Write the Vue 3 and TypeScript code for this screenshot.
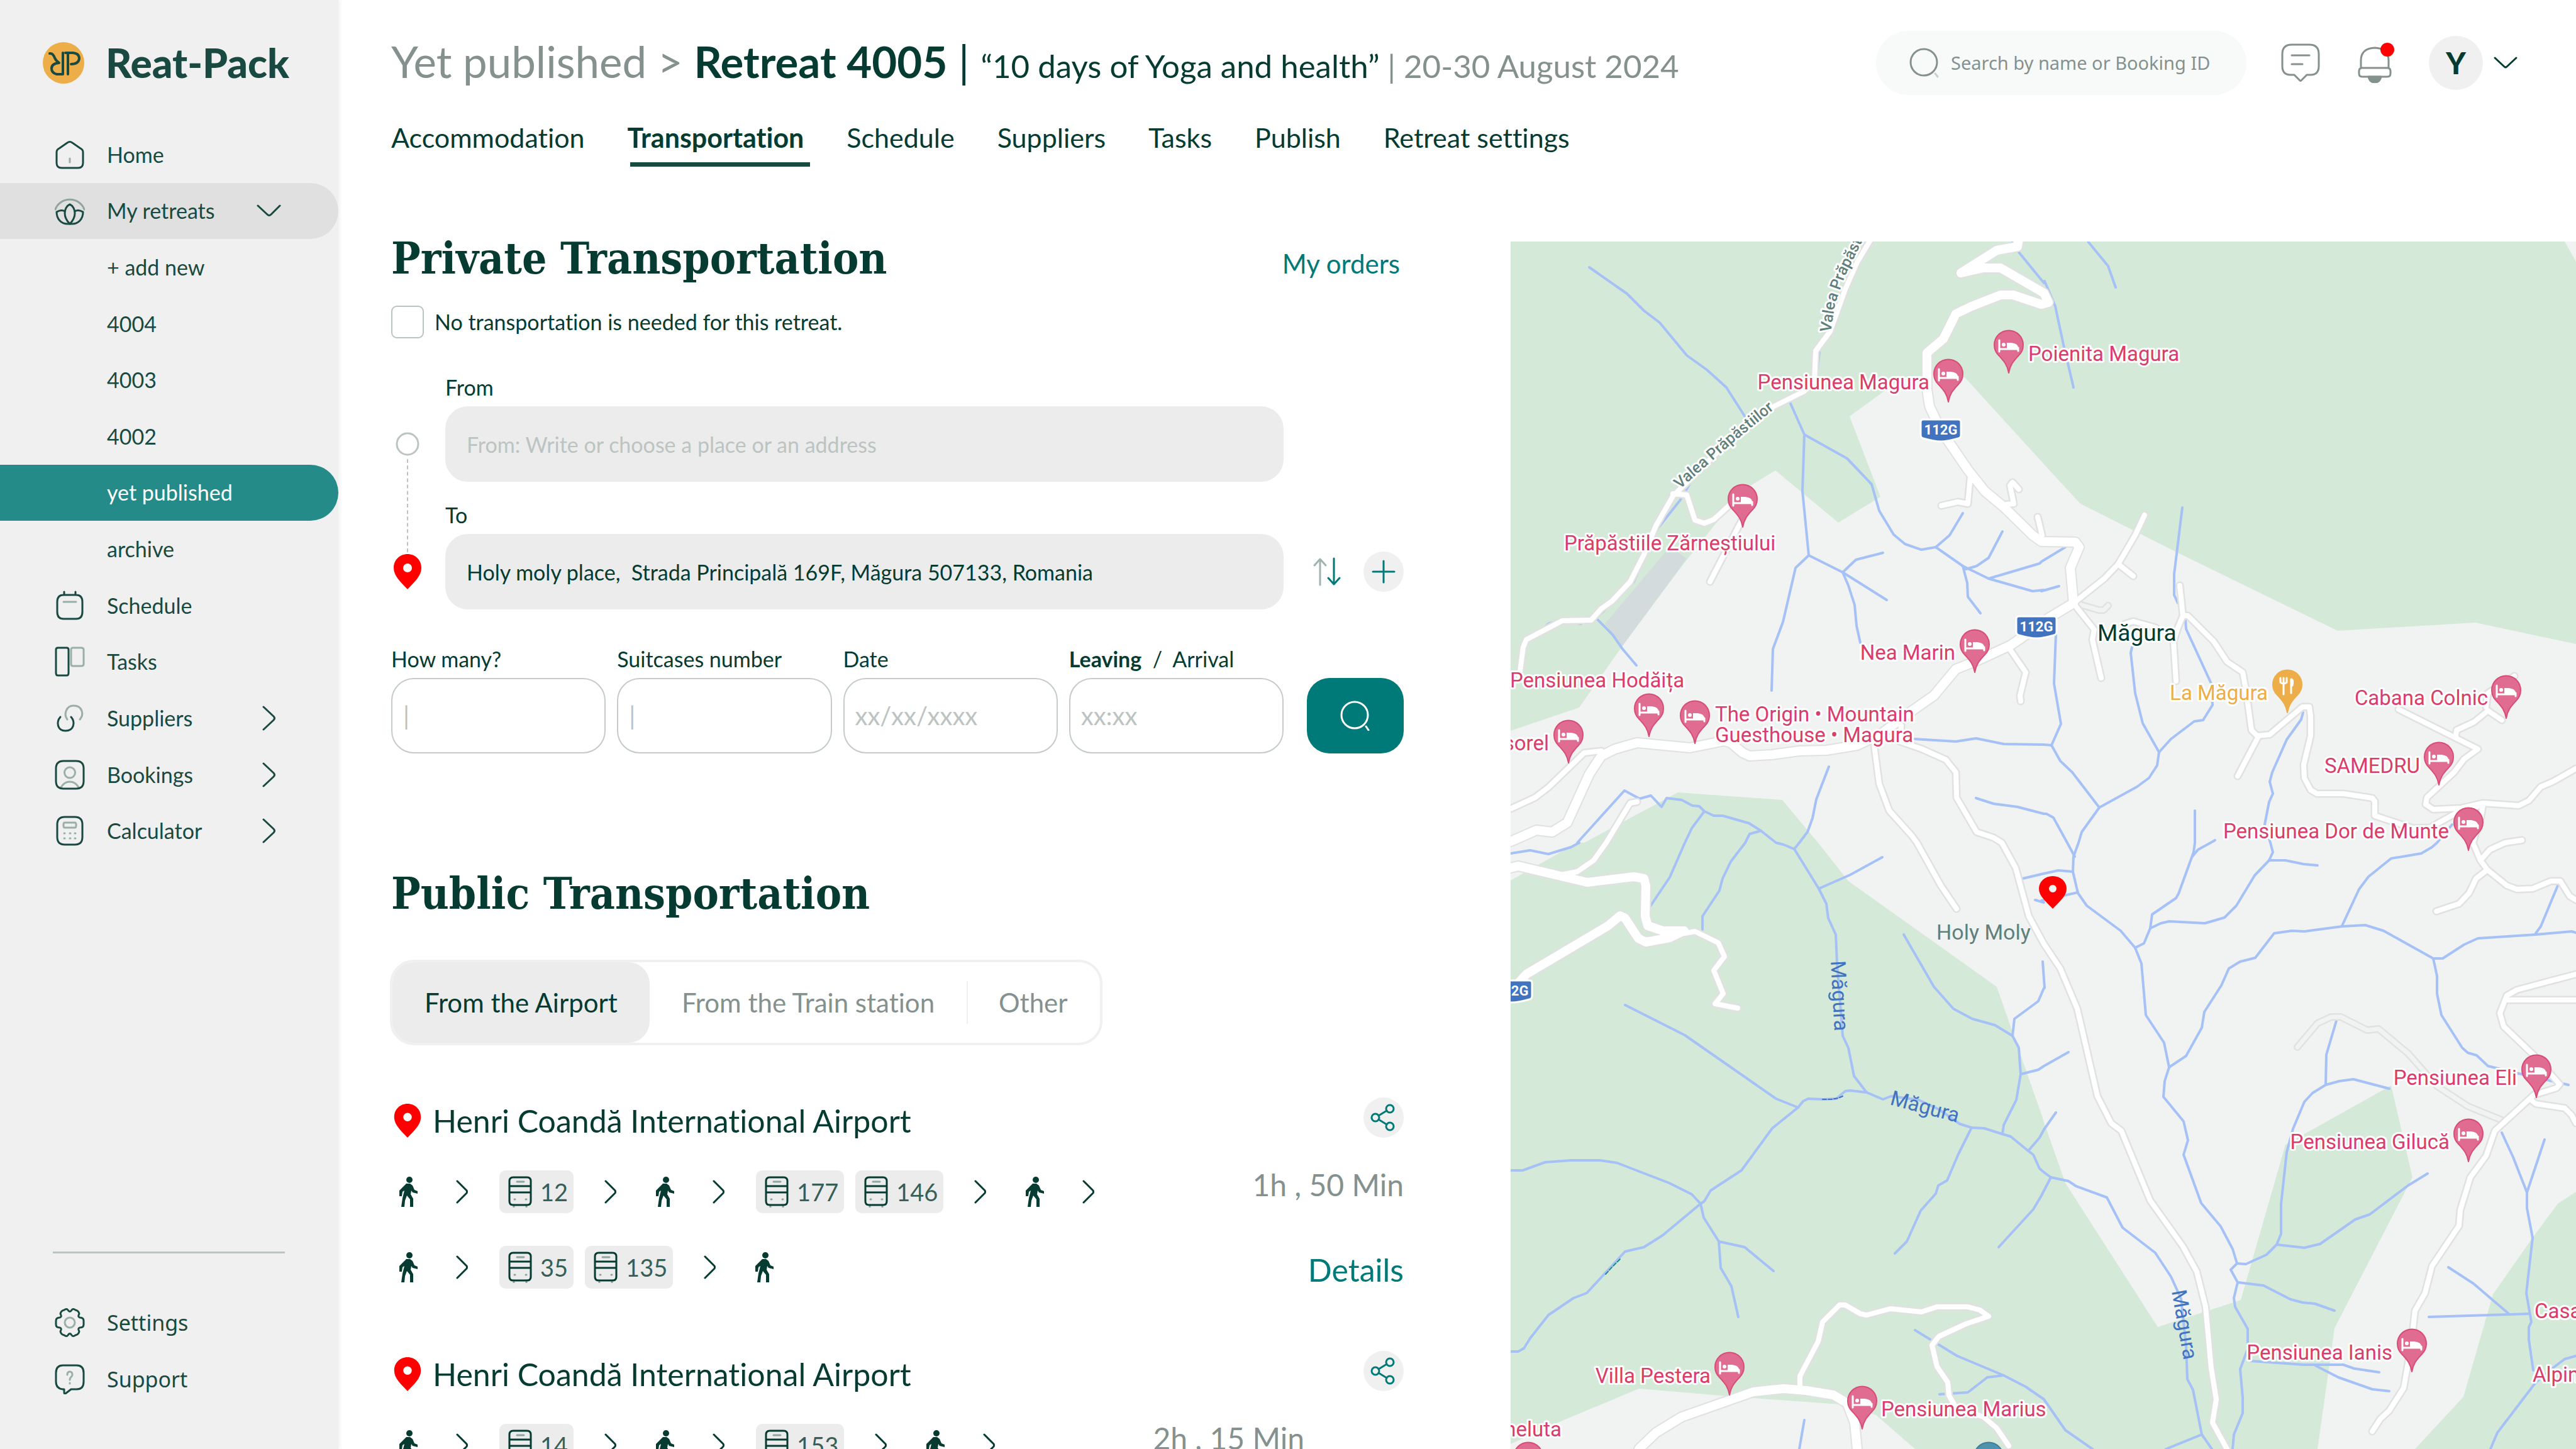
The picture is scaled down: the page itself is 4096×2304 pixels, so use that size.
<script setup lang="ts">
import { ref } from 'vue'

interface Stroke { d: string; soft?: boolean }
interface NavItem { label: string; icon?: string; arrow?: 'right' | 'down'; state?: 'open' | 'current' }
type Step = 'walk' | 'next' | string[]
interface Route { title: string; time: string; inset?: boolean; details: boolean; rows: Step[][] }

const icons: Record<string, Stroke[]> = {
  home: [
    { d: 'M3 20q0-4 4-6L20 5q4-3 8 0L41 14q4 2 4 6V37q0 8-8 8H11q-8 0-8-8Z' },
    { d: 'M24 30v6', soft: true },
  ],
  lotus: [
    { d: 'M1 22A24 22 0 0 1 47 22', soft: true },
    { d: 'M24 14c5 2 8 8 8 14s-3 12-8 17c-5-5-8-11-8-17s3-12 8-14Z' },
    { d: 'M16 25c-3-2-8-2-13 1 0 11 7 20 20 19M32 25c3-2 8-2 13 1 0 11-7 20-20 19' },
  ],
  calendar: [
    { d: 'M14 7H34q10 0 10 11V34q0 11-10 11H14Q4 45 4 34V18Q4 7 14 7ZM15 2v5M33 2v5' },
    { d: 'M14 18H34', soft: true },
  ],
  board: [
    { d: 'M5 2H19q3 0 3 3V42q0 4-3 4H5q-3 0-3-4V5q0-3 3-3Z' },
    { d: 'M29 2H42q4 0 4 3V28q0 3-4 3H29q-3 0-3-3V5q0-3 3-3Z', soft: true },
  ],
  link: [
    { d: 'M20 26C14 18 18 4 30 4 44 4 47 18 40 26', soft: true },
    { d: 'M9 22C2 30 4 44 17 44 31 44 33 30 26 22' },
  ],
  contact: [
    { d: 'M14 2H34q12 0 12 12V34q0 12-12 12H14Q2 46 2 34V14Q2 2 14 2Z' },
    { d: 'M24 12a8 8 0 1 1 0 17a8 8 0 1 1 0-17ZM10 44q5-9 14-9t14 9', soft: true },
  ],
  calculator: [
    { d: 'M16 2H32q12 0 12 12V34q0 12-12 12H16Q4 46 4 34V14Q4 2 16 2Z' },
    { d: 'M16 11H32q2 0 2 3v2q0 3-2 3H16q-2 0-2-3V14q0-3 2-3ZM15 28h1M24 28h1M32 28h1M15 36h1M24 36h1M32 36h1', soft: true },
  ],
  gear: [
    { d: 'M21 4q3 5 6 0 2-3 6 0 5 1 6 6-3 5 1 6 6 0 6 5v6q0 5-6 5-4 1-1 6-1 5-6 6-4 3-6 0-3-5-6 0-2 3-6 0-5-1-6-6 3-5-1-6-6 0-6-5V21q0-5 6-5 4-1 1-6 1-5 6-6 4-3 6 0Z' },
    { d: 'M24 16a8 8 0 1 1 0 16a8 8 0 1 1 0-16Z', soft: true },
  ],
  question: [
    { d: 'M13 2H35q11 0 11 12V28q0 12-11 12H26L17 47q-2 1-2-2V40H13Q2 39 2 28V14Q2 2 13 2Z' },
    { d: 'M20 17q0-5 4-5t4 5c0 4-4 3-4 8M24 30v1', soft: true },
  ],
}

const nav: NavItem[] = [
  { label: 'Home', icon: 'home' },
  { label: 'My retreats', icon: 'lotus', arrow: 'down', state: 'open' },
  { label: '+ add new' },
  { label: '4004' },
  { label: '4003' },
  { label: '4002' },
  { label: 'yet published', state: 'current' },
  { label: 'archive' },
  { label: 'Schedule', icon: 'calendar' },
  { label: 'Tasks', icon: 'board' },
  { label: 'Suppliers', icon: 'link', arrow: 'right' },
  { label: 'Bookings', icon: 'contact', arrow: 'right' },
  { label: 'Calculator', icon: 'calculator', arrow: 'right' },
]
const secondary: NavItem[] = [
  { label: 'Settings', icon: 'gear' },
  { label: 'Support', icon: 'question' },
]

const tabs = ['Accommodation', 'Transportation', 'Schedule', 'Suppliers', 'Tasks', 'Publish', 'Retreat settings']
const activeTab = ref('Transportation')

const sources = ['From the Airport', 'From the Train station', 'Other']
const activeSource = ref('From the Airport')

const noTransport = ref(false)
const from = ref('')
const to = ref('Holy moly place,  Strada Principală 169F, Măgura 507133, Romania')
const search = ref('')
const fields = [
  { id: 'people', label: 'How many?', hint: '|' },
  { id: 'suitcases', label: 'Suitcases number', hint: '|' },
  { id: 'date', label: 'Date', hint: 'xx/xx/xxxx' },
  { id: 'time', label: 'Leaving', alt: 'Arrival', hint: 'xx:xx' },
]

const routes: Route[] = [
  {
    title: 'Henri Coandă International Airport',
    time: '1h , 50 Min',
    details: true,
    rows: [
      ['walk', 'next', ['12'], 'next', 'walk', 'next', ['177', '146'], 'next', 'walk', 'next'],
      ['walk', 'next', ['35', '135'], 'next', 'walk'],
    ],
  },
  {
    title: 'Henri Coandă International Airport',
    time: '2h , 15 Min',
    inset: true,
    details: false,
    rows: [['walk', 'next', ['14'], 'next', 'walk', 'next', ['153'], 'next', 'walk', 'next']],
  },
]

// The map is surveyed in four sheets; every sheet has its own 1568-unit grid.
const sheets: Record<string, { x: number; y: number; w: number; h: number }> = {
  A: { x: -2, y: -4, w: 850, h: 960 },
  B: { x: 844, y: -4, w: 850, h: 960 },
  C: { x: -2, y: 956, w: 850, h: 964 },
  D: { x: 844, y: 956, w: 850, h: 964 },
}
function place(sheet: string, x: number, y: number): [number, number] {
  const s = sheets[sheet]
  return [Math.round(s.x + (x * s.w) / 1568), Math.round(s.y + (y * s.h) / 1568)]
}
// A trace is a list of points; a letter switches to another sheet.
function trace(points: string): string {
  let sheet = 'A'
  const out: string[] = []
  for (const token of points.split(' ')) {
    if (sheets[token]) sheet = token
    else {
      const [x, y] = token.split(',').map(Number)
      out.push(place(sheet, x, y).join(','))
    }
  }
  return out.join(' ')
}

const woods = [
  'A 4,7 B 1535,7 1568,58 1568,1052 1272,997 868,1017 400,815 115,687 0,578 A 1568,585 1335,360 1225,355 1150,360 1100,395 998,460 1088,670 965,737 780,601 700,645 640,700 515,840 330,1058 205,1217 4,1277',
  'A 220,1568 495,1437 800,1457 875,1535 C 905,0 995,100 1430,372 1475,490 1568,720 D 0,705 70,880 342,1252 585,1183 715,780 1025,628 1088,865 860,1255 845,1350 810,1568 C 1190,1568 1075,1480 970,1452 640,1432 380,1412 130,1505 4,1555 4,97 200,0',
  'D 1568,902 1515,933 1440,1022 1325,1168 1238,1433 1095,1568 1568,1568',
].map(trace)
const quarry = trace('A 455,815 490,812 520,830 330,1058 280,1000')

const streams = [
  'A 235,73 345,142 395,187 440,217 520,302 580,340 637,385 692,462',
  'A 910,290 902,360',
  'A 760,450 820,420 865,508 990,570 1063,637 1085,705 1128,767 1160,792 1208,807 1250,800 1330,850 1405,882 1535,915 1568,912 B 0,915 52,902',
  'A 1250,800 1292,770 1330,712',
  'A 1330,850 1343,893 1345,930 1382,972',
  'A 1340,857 1370,850 1405,828 1447,760',
  'A 1405,882 1555,843 B 0,838 70,800',
  'A 865,508 860,655 878,822 977,866 1107,938',
  'A 977,866 1017,833 1095,815',
  'A 977,866 995,900 1012,950 1018,1005 1030,1048',
  'A 878,822 840,855 833,875 803,995 773,1065 770,1172',
  'A 530,635 500,680 435,752 400,820 365,890 255,985 302,1027 332,1065 373,1108',
  'A 60,1042 115,1000 150,990 210,1000',
  'A 1190,1298 1310,1305 1368,1297 1450,1312 1568,1313 B 30,1315 55,1355 90,1385 170,1477 118,1540 108,1568 D 108,0 95,35 92,75 107,130 132,162 232,228 275,272 293,312 307,445 360,517 375,580 362,617 358,657 417,720 429,770 416,807 468,932 525,992 560,1050 573,1088 555,1105 576,1137 565,1177 568,1200 605,1258 605,1310 583,1362 591,1435 590,1475 565,1530 560,1568',
  'B 42,1025 36,1155 58,1260 30,1315',
  'A 938,1370 900,1455 890,1505 875,1540 850,1568 C 835,17',
  'A 1368,1452 1420,1466 1490,1475 1568,1493 B 15,1493 35,1503 75,1568 D 97,35',
  'A 200,1568 337,1433 382,1453 415,1445 447,1475 462,1452 505,1457 537,1472 557,1474 572,1487 600,1498 625,1497 702,1517 737,1537 782,1568 C 805,5 835,17 908,118 930,157 935,195 957,237 962,310 978,500 995,530 1010,603 1047,645 1095,663 1120,655 1200,665 1260,690 1320,727 1355,737 1392,738 1445,753 1470,760 1522,797 1537,807 1555,843 1568,852 D 27,865 80,875 102,888 192,918 238,995 333,1060 380,1122 410,1180 425,1300 428,1387 445,1415 470,1530 500,1568',
  'C 4,28 60,20 115,30 180,12 205,0',
  'A 572,1487 535,1530 515,1568 C 470,90 413,165',
  'A 737,1537 705,1545 692,1568 C 650,48 625,92 617,123 567,190 567,225',
  'C 908,118 1000,83 1094,37',
  'C 340,420 515,497 782,662 847,685 862,668 877,662 920,663 960,662 985,643 1000,641 1047,645',
  'C 847,685 772,738 680,848 590,900 572,927 560,933 450,1015 395,1046 340,1058 227,1165 188,1177 115,1221 60,1282 42,1308 25,1316 4,1316',
  'C 4,848 38,847 105,826 180,821 265,821 315,828 468,880 535,910 560,933 570,970 615,1031 690,1046 775,1108',
  'C 615,1031 620,1100 652,1147 671,1227',
  'C 1157,237 1245,373 1303,430 1358,455 1425,472 1475,500 1495,530 1499,598 1487,665 1450,730 1447,753',
  'C 1475,500 1482,455 1552,410 1568,375 D 10,375 4,308',
  'C 1499,598 1552,587 1568,578 D 80,542',
  'C 1355,737 1318,805 1283,873 1258,886 1250,908 1207,952 1165,1032 1130,1062',
  'C 1522,797 1555,763 1568,742 D 42,698',
  'D 27,865 0,912 C 1537,948 1435,1046',
  'C 1190,1260 1313,1327 1450,1377 1515,1407 1568,1440 D 70,1520 150,1568',
  'C 1450,1377 1402,1382 1345,1421 1262,1427',
  'C 1505,92 1568,80 D 50,72 92,75',
  'C 1543,148 1568,155 D 0,150 107,128',
  'C 865,1493 850,1568',
  'B 265,1060 262,1075 275,1180 297,1257 345,1332 340,1367 315,1400 280,1423 170,1477',
  'B 345,1332 380,1298 448,1252 475,1249 502,1210 498,1155 425,1013 422,990',
  'B 414,698 390,870 390,925 400,945',
  'B 767,1230 762,1248 720,1300 677,1385 670,1410 679,1440 667,1462 655,1520 672,1568 D 678,25 668,46 625,85 572,162 537,193 480,208 375,204 350,209 320,222 300,260 275,272',
  'D 668,46 715,46 770,56 810,59',
  'B 451,1485 450,1568 D 447,25 403,132 395,143 325,185 320,222',
  'D 440,38 460,18 497,0 B 510,1562',
  'B 1205,1520 1160,1568 D 1145,12 1115,27 1025,40 960,88 932,120 882,215',
  'D 375,580 425,552 470,478 477,437 528,370 550,325 583,307 628,297 682,235 735,227 772,230 882,217 950,213 1003,227 1150,300 1177,300 1240,263 1280,247 1450,237 1555,229 1568,233',
  'D 1514,110 1465,217 1450,235',
  'D 1150,300 1160,345 1160,390 1173,445 1235,530 1250,543 1277,550 1310,577 1400,597 1545,627',
  'D 865,460 835,548 833,627',
  'D 1020,636 915,612 875,616 833,627 795,647 772,670 737,740 720,800 703,935 703,1012 690,1040 660,1065 600,1090 573,1088',
  'D 690,1040 772,1048 817,1038 920,975 963,962 1075,887 1132,856',
  'D 576,1137 652,1145 730,1181 765,1189 803,1192 860,1210',
  'D 615,1340 770,1350 885,1350 917,1360 990,1370',
  'D 803,1352 870,1383 970,1413 1020,1419',
  'D 1350,750 1383,813 1425,905 1475,767',
  'D 1425,905 1425,945 1440,1022 1422,1165 1437,1240 1430,1252 1430,1285 1442,1365',
  'D 1137,1227 1432,1219',
  'D 1193,1098 1267,1141 1368,1217',
  'D 1568,1328 1535,1335 1505,1355 1450,1395 1337,1525 1317,1568',
  'D 365,1568 470,1530',
  'B 137,7 195,70 217,125',
  'A 1475,7 1495,35 1568,115 B 10,110 40,175 65,275 95,385',
].map(trace)

const fords = [
  ['C 918,664 945,664 965,660 978,655', '#4173bf'],
  ['C 283,1116 303,1097 324,1077', '#258b89'],
].map(([points, color]) => ({ points: trace(points), color }))

const tracks = [
  'D 750,528 810,467 850,450 878,450 955,485 988,482 1075,545 1160,630 1250,682 1350,718',
  'B 100,945 168,963 183,963 195,952',
].map(trace)

const lanes = [
  'A 1060,0 1020,60 985,130 940,240 898,290 895,370 865,395 740,450 620,545 500,650 480,668 430,745 395,820 355,890 300,940 270,960 240,990 155,992 50,1040 40,1060 30,1135',
  'A 480,662 520,665 545,730 572,738 600,728 660,680',
  'A 684,725 588,890',
  'A 1352,615 1345,688 1315,683 1268,692',
  'A 1455,690 1480,688 1468,640 1475,632 1495,650',
  'A 1550,722 1562,770',
  'B 95,945 185,882 225,845 275,770 302,717',
  'B 225,845 270,875',
  'B 98,950 155,1015 150,1040 176,1140',
  'B 405,900 415,978 400,1010 388,1045 395,1148',
  'B 245,1000 270,993 335,1010',
  'B 415,978 430,978 505,1045 545,1098 590,1125 600,1170 617,1275 632,1290 670,1287 765,1215 785,1215 790,1240 790,1290 770,1365 772,1400 790,1430 808,1441 885,1441 970,1452 978,1460 978,1498 1090,1530 1140,1528 1220,1490 1295,1470 1290,1500 1265,1568 D 1288,45 1308,70 1275,92 1255,130 1225,157 1158,177',
  'B 635,1295 575,1395',
  'B 1048,1222 1280,1325 1240,1350 1210,1385 1130,1450 1128,1468 1150,1481 1230,1478 1295,1465 1400,1472 1430,1458 1465,1423 1500,1410 1568,1375',
  'B 1215,1290 1218,1275 1270,1255 1310,1225 1350,1250',
  'B 1305,1215 1310,1180 1388,1135',
  'D 1308,70 1365,110 1395,120 1440,118 1495,100 1522,100 1550,138 1568,148',
  'D 1288,45 1315,18 1360,0 B 1410,1562',
  'A 4,1480 75,1450 115,1425 220,1335 270,1330',
  'A 375,1462 355,1465 285,1568 C 248,45 200,75 160,82',
  'A 1470,1068 1515,1125 1497,1185 1500,1200',
  'A 1070,1315 1085,1415 1115,1485 1180,1550 C 1195,0 1265,110 1312,170',
  'A 1150,1265 1145,1305 1210,1325 1280,1353 1310,1385 1312,1450 1370,1540 1420,1555 C 1445,0 1485,65 1523,190 1568,262 D 55,325 105,430 165,655 205,725 235,745 320,925 415,1045 455,1110 482,1200 498,1360 512,1440 502,1500 545,1568',
  'C 515,235 545,230 612,258 630,295 600,330 627,390 603,417 670,428',
  'C 853,1405 853,1380 905,1290 918,1240 968,1195 985,1195 1030,1218 1048,1222 1118,1205 1208,1213 1255,1200 1345,1200 1380,1208 1405,1225 1340,1245 1260,1277 1240,1300 1255,1355 1285,1395 1290,1430 1310,1460 1390,1485 1430,1515 1465,1560',
  'D 1568,340 1395,380 1365,395 1345,440 1355,475 1445,550 1520,625 1510,635 1445,652 1330,745 1305,810 1258,865 1228,950 1225,990 1145,1095 1125,1165 1095,1210 1085,1300 1062,1410 1020,1468 995,1490 970,1522',
  'D 1365,407 1568,406',
  'D 1440,668 1450,675 1535,687 1555,705 1568,725',
].map(trace)

const roads = [
  'A 1495,0 1490,20 1430,30 1325,88 1390,75 1440,75 1568,140 B 20,165 0,170 A 1478,145 1440,145 1355,175 1310,195 1272,260 1225,295 1225,390 1233,435 1265,497 1345,600 1395,655 1450,695 1535,770 B 0,785 100,788 110,800 85,855 95,945 20,985 A 1545,1010 1470,1055 1375,1095 1310,1118 1245,1185 1165,1235 1090,1285 1020,1315 930,1328 850,1330 770,1340 705,1342 685,1335 650,1308 630,1303 530,1322 375,1308 310,1325 270,1342 235,1390 170,1515 125,1540 80,1535 4,1565',
  'C 4,65 25,60 228,102 365,88 395,92 400,110 398,190 405,215 450,228 512,228 470,245 400,257 378,248 340,195 325,188 290,215 50,340 4,385',
  'C 380,1568 430,1525 505,1485 715,1420 805,1412 870,1416 950,1428 990,1450 1012,1500 1020,1568',
].map(trace)

interface Label { at: [string, number, number]; text: string; tone?: string; end?: boolean; turn?: number }
const labels = ([
  { at: ['A', 1232, 391], text: 'Pensiunea Magura', end: true },
  { at: ['A', 1521, 317], text: 'Poienita Magura' },
  { at: ['A', 160, 809], text: 'Prăpăstiile Zărneștiului' },
  { at: ['A', 2, 1165], text: 'Pensiunea Hodăița' },
  { at: ['A', 116, 1328], text: 'sorel', end: true },
  { at: ['A', 603, 1252], text: 'The Origin • Mountain' },
  { at: ['A', 603, 1306], text: 'Guesthouse • Magura' },
  { at: ['A', 1308, 1093], text: 'Nea Marin', end: true },
  { at: ['B', 165, 1044], text: 'Măgura', tone: 'town' },
  { at: ['B', 665, 1197], text: 'La Măgura', tone: 'food', end: true },
  { at: ['B', 1310, 1211], text: 'Cabana Colnic', end: true },
  { at: ['B', 1110, 1386], text: 'SAMEDRU', end: true },
  { at: ['B', 1195, 1556], text: 'Pensiunea Dor de Munte', end: true },
  { at: ['C', 1253, 250], text: 'Holy Moly', tone: 'place' },
  { at: ['C', 590, 1397], text: 'Villa Pestera', end: true },
  { at: ['C', 1091, 1484], text: 'Pensiunea Marius' },
  { at: ['C', 153, 1536], text: 'neluta', end: true },
  { at: ['D', 1395, 626], text: 'Pensiunea Eli', end: true },
  { at: ['D', 1197, 792], text: 'Pensiunea Gilucă', end: true },
  { at: ['D', 1030, 1337], text: 'Pensiunea Ianis', end: true },
  { at: ['D', 1447, 1229], text: 'Casa' },
  { at: ['D', 1440, 1394], text: 'Alpin' },
  { at: ['C', 943, 305], text: 'Măgura', tone: 'river', turn: 87 },
  { at: ['C', 1115, 676], text: 'Măgura', tone: 'river', turn: 15 },
  { at: ['D', 382, 1160], text: 'Măgura', tone: 'river', turn: 80 },
] as Label[]).map((l) => ({ ...l, xy: place(...l.at) }))

const valleyLow = 'M' + trace('A 500,650 575,592 665,522 762,452 800,425')
const valleyHigh = 'M' + trace('A 942,243 955,168 985,95 1045,-10 1080,-60')

const inns = ([
  ['A', 1288, 425], ['A', 1464, 350], ['A', 684, 750], ['A', 409, 1293], ['A', 545, 1312], ['A', 174, 1362],
  ['A', 1365, 1127], ['B', 1364, 1246], ['B', 1165, 1420], ['B', 1253, 1590], ['C', 646, 1430], ['C', 1034, 1518],
  ['C', 55, 1663], ['D', 1451, 660], ['D', 1253, 827], ['D', 1086, 1370],
] as [string, number, number][]).map((p) => place(...p))
const cafe = place('B', 722, 1232)
const stop = place('C', 1405, 1663)
const target = place('D', 33, 171)
const shields = ([['A', 1266, 497], ['A', 1546, 1008], ['C', 7, 384]] as [string, number, number][]).map((p) => place(...p))
const move = (p: number[]) => `translate(${p[0]} ${p[1]})`
</script>

<template>
  <div class="app">
    <aside class="sidebar">
      <a href="#" class="brand">
        <svg class="brand-mark" viewBox="0 0 66 66" aria-hidden="true">
          <circle cx="33" cy="33" r="33" fill="#edad49" />
          <path d="M40 51V17M36 17H48Q58 18 58 26 57 35 45 35M32 17V51H22Q14 49 14 42 14 34 26 33 21 30 19 25 16 17 11 18" fill="none" stroke="#194a41" stroke-width="4" />
        </svg>
        <span>Reat-Pack</span>
      </a>

      <nav class="nav">
        <a v-for="item in nav" :key="item.label" href="#" class="nav-item" :class="item.state">
          <span class="nav-icon">
            <svg v-if="item.icon" class="icon48" viewBox="0 0 48 48" aria-hidden="true">
              <path v-for="(s, i) in icons[item.icon]" :key="i" :d="s.d" :class="{ soft: s.soft }" />
            </svg>
          </span>
          <span class="nav-label">{{ item.label }}</span>
          <svg v-if="item.arrow" class="nav-arrow" viewBox="0 0 40 40" aria-hidden="true">
            <path v-if="item.arrow === 'down'" d="M3 12L18 26q3 3 6 0L38 12" />
            <path v-else d="M12 2L28 17q3 3 0 6L12 38" />
          </svg>
        </a>
      </nav>

      <nav class="nav-bottom">
        <a v-for="item in secondary" :key="item.label" href="#" class="nav-item">
          <span class="nav-icon">
            <svg class="icon48" viewBox="0 0 48 48" aria-hidden="true">
              <path v-for="(s, i) in icons[item.icon!]" :key="i" :d="s.d" :class="{ soft: s.soft }" />
            </svg>
          </span>
          <span class="nav-label">{{ item.label }}</span>
        </a>
      </nav>
    </aside>

    <main class="main">
      <header class="top">
        <h1 class="crumbs">
          <a href="#" class="muted">Yet published</a> <span class="muted">&gt;</span> <strong>Retreat 4005</strong> <span>|</span>
          <span class="crumb-small">“10 days of Yoga and health” <span class="muted">| 20-30 August 2024</span></span>
        </h1>
        <div class="tools">
          <label class="search">
            <svg viewBox="0 0 48 48" aria-hidden="true">
              <circle cx="23" cy="23" r="21" />
              <path d="M41 41l4 5" class="soft" />
            </svg>
            <input v-model="search" type="search" placeholder="Search by name or Booking ID" aria-label="Search by name or Booking ID" />
          </label>
          <button type="button" class="tool" aria-label="Messages">
            <svg viewBox="0 0 64 64" aria-hidden="true">
              <path d="M18 3H46Q61 3 61 18V37Q61 51 48 51H42L33 60q-1 1-2 0L22 51H16Q3 51 3 37V18Q3 3 18 3Z" />
              <path d="M18 20H46M18 34H35" />
            </svg>
          </button>
          <button type="button" class="tool" aria-label="Notifications">
            <svg viewBox="0 0 64 64" aria-hidden="true">
              <path d="M10 40V28Q10 9 32 8 54 9 54 28V40M12 40H52q5 0 5 5v4q0 5-5 5H12q-5 0-5-5V45q0-5 5-5Z" />
              <path d="M22 54H42Q40 63 32 63T22 54Z" class="solid" />
              <circle cx="52" cy="11" r="11" class="dot" />
            </svg>
          </button>
          <button type="button" class="account" aria-label="Account">
            <span class="avatar">Y</span>
            <svg viewBox="0 0 40 24" aria-hidden="true"><path d="M3 4L18 18q2 2 4 0L37 4" /></svg>
          </button>
        </div>
      </header>

      <nav class="tabs">
        <a v-for="tab in tabs" :key="tab" href="#" :class="{ active: tab === activeTab }" @click.prevent="activeTab = tab">{{ tab }}</a>
      </nav>

      <div class="content">
        <div class="panel">
          <section>
            <div class="section-head">
              <h2>Private Transportation</h2>
              <a href="#" class="orders">My orders</a>
            </div>

            <label class="check">
              <input v-model="noTransport" type="checkbox" />
              <span>No transportation is needed for this retreat.</span>
            </label>

            <form @submit.prevent>
              <div class="stops">
                <label for="from" class="stop-label">From</label>
                <span class="marker from-marker">
                  <svg width="40" height="40" viewBox="0 0 40 40" aria-hidden="true"><circle cx="20" cy="20" r="17" fill="none" stroke="#bcc4c2" stroke-width="3" /></svg>
                </span>
                <input id="from" v-model="from" class="field filled" placeholder="From: Write or choose a place or an address" />
                <label for="to" class="stop-label second">To</label>
                <span class="marker">
                  <svg width="44" height="56" viewBox="0 0 44 56" aria-hidden="true"><path d="M22 0C34 0 44 9 44 22 44 35 33 44 22 56 11 44 0 35 0 22 0 9 10 0 22 0ZM22 15a7 7 0 1 0 0 14a7 7 0 1 0 0-14Z" fill="#f00" /></svg>
                </span>
                <input id="to" v-model="to" class="field filled" />
                <span class="stop-actions">
                  <button type="button" class="plain" aria-label="Swap">
                    <svg width="48" height="48" viewBox="0 0 48 48" aria-hidden="true">
                      <path d="M13 45V4M4 14l9-10 9 10" stroke="#9fb3af" />
                      <path d="M35 3V44M26 34l9 10 9-10" stroke="#007a78" />
                    </svg>
                  </button>
                  <button type="button" class="round" aria-label="Add stop">
                    <svg width="64" height="64" viewBox="0 0 64 64" aria-hidden="true"><path d="M32 15V49M15 32H49" stroke="#007a78" /></svg>
                  </button>
                </span>
              </div>

              <div class="trip">
                <div v-for="f in fields" :key="f.id" class="trip-field">
                  <label :for="f.id">
                    <template v-if="f.alt"><strong>{{ f.label }}</strong>&nbsp; / &nbsp;{{ f.alt }}</template>
                    <template v-else>{{ f.label }}</template>
                  </label>
                  <input :id="f.id" class="field" :placeholder="f.hint" />
                </div>
                <button type="submit" class="go" aria-label="Search">
                  <svg width="48" height="48" viewBox="0 0 48 48" aria-hidden="true"><circle cx="23" cy="23" r="21" /><path d="M41 41l4 6" /></svg>
                </button>
              </div>
            </form>
          </section>

          <section class="public">
            <h2>Public Transportation</h2>
            <div class="segments">
              <button v-for="s in sources" :key="s" type="button" :class="{ active: s === activeSource }" @click="activeSource = s">{{ s }}</button>
            </div>

            <article v-for="(route, r) in routes" :key="r" class="route">
              <div class="route-head">
                <svg width="44" height="54" viewBox="0 0 44 56" aria-hidden="true"><path d="M22 0C34 0 44 9 44 22 44 35 33 44 22 56 11 44 0 35 0 22 0 9 10 0 22 0ZM22 15a7 7 0 1 0 0 14a7 7 0 1 0 0-14Z" fill="#f00" /></svg>
                <h3>{{ route.title }}</h3>
                <button type="button" class="round" aria-label="Share">
                  <svg width="64" height="64" viewBox="0 0 64 64" aria-hidden="true" stroke="#007a78">
                    <circle cx="42" cy="18" r="6" /><circle cx="19" cy="32" r="6" /><circle cx="42" cy="46" r="6" />
                    <path d="M24 29L37 21M24 35L37 43" />
                  </svg>
                </button>
              </div>
              <div class="route-body">
                <div class="rows">
                  <div v-for="(row, i) in route.rows" :key="i" class="steps">
                    <template v-for="(step, j) in row" :key="j">
                      <svg v-if="step === 'walk'" class="walk" viewBox="0 0 54 48" aria-label="Walk">
                        <circle cx="29" cy="5" r="5" />
                        <path d="M24 11h6l4 3 3 7 5 2v4l-8-2-2-3-1 6 4 7v13h-5V36l-5-6-3 8-1 10h-5l2-14 3-12-3 2-1 7h-4v-9Z" />
                      </svg>
                      <svg v-else-if="step === 'next'" class="next" viewBox="0 0 20 40" aria-hidden="true"><path d="M2 3L17 18q1 2 0 4L2 37" /></svg>
                      <span v-else class="buses">
                        <span v-for="bus in step" :key="bus" class="bus">
                          <svg width="38" height="50" viewBox="0 0 38 50" aria-hidden="true">
                            <path d="M9 46v4M29 46v4M10 37h1M28 37h1M14 9H25" class="soft" />
                            <path d="M8 2H30q6 0 6 6V40q0 6-6 6H8q-6 0-6-6V8q0-6 6-6ZM2 16H36M2 26H36" />
                          </svg>
                          {{ bus }}
                        </span>
                      </span>
                    </template>
                  </div>
                </div>
                <div class="route-side" :class="{ inset: route.inset }">
                  <span class="time">{{ route.time }}</span>
                  <a v-if="route.details" href="#" class="details">Details</a>
                </div>
              </div>
            </article>
          </section>
        </div>

        <div class="map">
          <svg viewBox="0 0 1694 1920" preserveAspectRatio="xMinYMin slice" role="img" aria-label="Map of Măgura">
            <defs>
              <g id="inn">
                <path d="M0-1C-2-14-8-20-16-29A23 23 0 1 1 16-29C8-20 2-14 0-1Z" fill="#e06c92" stroke="#d94c78" stroke-width="2" />
                <path d="M-15-53V-35M15-36V-41M-15-39H15" stroke="#fff" stroke-width="3" fill="none" />
                <circle cx="-8" cy="-46" r="3" fill="#fff" />
                <path d="M-3-49H4Q15-48 15-41V-39H-3Z" fill="#fff" />
              </g>
              <path id="valley-low" :d="valleyLow" />
              <path id="valley-high" :d="valleyHigh" />
            </defs>
            <rect width="1694" height="1920" fill="#f1f3f3" />
            <polygon v-for="w in woods" :key="w" :points="w" fill="#d5e9d9" />
            <polygon :points="quarry" fill="#d4dbdc" />
            <g class="line">
              <polyline v-for="s in streams" :key="s" :points="s" stroke="#a5c1f6" stroke-width="4" />
              <polyline v-for="f in fords" :key="f.points" :points="f.points" :stroke="f.color" stroke-width="2" stroke-dasharray="6 3" />
              <polyline v-for="l in tracks" :key="l" :points="l" stroke="#e0e1e0" stroke-width="12" />
              <polyline v-for="l in tracks" :key="'in' + l" :points="l" stroke="#f1f3f3" stroke-width="7" />
              <polyline v-for="l in lanes" :key="l" :points="l" stroke="#e0e1e0" stroke-width="13" />
              <polyline v-for="l in roads" :key="l" :points="l" stroke="#e0e1e0" stroke-width="18" />
              <polyline v-for="l in lanes" :key="'in' + l" :points="l" stroke="#fff" stroke-width="8" />
              <polyline v-for="l in roads" :key="'in' + l" :points="l" stroke="#fff" stroke-width="14" />
            </g>
            <g v-for="(p, i) in shields" :key="'s' + i" :transform="move(p)">
              <path d="M-28-17H28q4 0 4 4V8q0 4-4 5Q10 18 0 18T-28 13q-4-1-4-5V-13q0-4 4-4Z" fill="#4173bf" stroke="#fff" stroke-width="3" />
              <text y="7" class="shield">112G</text>
            </g>
            <text class="valley"><textPath href="#valley-low">Valea Prăpăstiilor</textPath></text>
            <text class="valley"><textPath href="#valley-high">Valea Prăpăstiilor</textPath></text>
            <use v-for="(p, i) in inns" :key="'i' + i" href="#inn" :transform="move(p)" />
            <g :transform="move(cafe)">
              <path d="M0-1C-2-14-8-20-16-29A23 23 0 1 1 16-29C8-20 2-14 0-1Z" fill="#edad49" stroke="#edad49" stroke-width="2" />
              <path d="M-11-56V-49Q-6-45-1-49V-56M-6-56V-30M6-32V-54Q10-54 8-44" fill="none" stroke="#fff" stroke-width="3" />
            </g>
            <g :transform="move(stop)">
              <path d="M0-1C-2-14-8-20-16-29A23 23 0 1 1 16-29C8-20 2-14 0-1Z" fill="#4e93ae" stroke="#3d7f9c" stroke-width="2" />
              <path d="M-10-46V-53H-4V-46M3-54H11M3-50H11" fill="none" stroke="#fff" stroke-width="2" />
            </g>
            <text v-for="(l, i) in labels" :key="'l' + i" class="label" :class="[l.tone, { end: l.end }]" :transform="move(l.xy) + (l.turn ? ` rotate(${l.turn})` : '')">{{ l.text }}</text>
            <g :transform="move(target)">
              <path d="M0 0C-11-12-22-20-22-32A22 20 0 0 1 22-32C22-20 11-12 0 0ZM0-38a6 6 0 1 0 0 12a6 6 0 1 0 0-12Z" fill="#f00" />
            </g>
          </svg>
        </div>
      </div>
    </main>
  </div>
</template>

<style>
body {
  margin: 0;
}
</style>

<style scoped>
.app {
  --ink: #053b31;
  --pine: #194a41;
  --muted: #84918e;
  --line: #bcc4c2;
  --teal: #007a78;
  display: grid;
  grid-template-columns: 538px minmax(0, 1fr);
  grid-template-rows: minmax(0, 1fr);
  height: 100vh;
  overflow: hidden;
  background: #fff;
  color: var(--ink);
  font-family: Lato, "Noto Sans", sans-serif;
  font-size: 34px;
  font-variant-ligatures: none;
  line-height: 40px;
}
a { color: inherit; text-decoration: none; }
button { padding: 0; border: 0; background: none; color: inherit; font: inherit; font-variant-ligatures: none; }
input { box-sizing: border-box; min-width: 0; color: inherit; font: inherit; font-variant-ligatures: none; outline: none; }
h1, h2, h3 { margin: 0; font-weight: 400; }
svg { display: block; flex: none; fill: none; stroke-linecap: round; stroke-linejoin: round; }

.sidebar {
  display: flex;
  flex-direction: column;
  background: #f0f0f0;
  color: var(--pine);
  box-shadow: 2px 0 6px rgba(25, 74, 65, 0.08);
  z-index: 1;
}
.brand {
  display: flex;
  align-items: center;
  gap: 34px;
  height: 66px;
  margin: 67px 0 68px 68px;
  font-size: 64px;
  font-weight: 900;
}
.brand-mark { width: 66px; height: 66px; }
.nav {
  display: grid;
  grid-auto-rows: 1fr;
  min-height: 1165px;
}
.nav-item {
  display: flex;
  align-items: center;
  padding: 0 87px;
  border-radius: 0 45px 45px 0;
}
.nav-item.open { background: #e0e0e0; }
.nav-item.current { background: #258b89; color: #fff; }
.nav-icon { width: 48px; margin-right: 35px; }
.nav-label { flex: 1; }
.icon48, .nav-arrow { width: 48px; height: 48px; stroke: var(--pine); stroke-width: 3; }
.nav-arrow { width: 40px; height: 40px; margin-right: 4px; }
.soft { opacity: 0.4; }
.nav-bottom {
  position: relative;
  margin-top: auto;
  padding: 68px 0 66px;
  font-family: "Noto Sans", sans-serif;
}
.nav-bottom::before {
  content: "";
  position: absolute;
  top: 0;
  left: 84px;
  right: 85px;
  height: 3px;
  background: var(--line);
}
.nav-bottom .nav-item { height: 90px; }

.main { display: flex; flex-direction: column; min-width: 0; min-height: 0; }
.top {
  display: flex;
  justify-content: space-between;
  height: 102px;
  padding: 49px 92px 0 84px;
}
.muted { color: var(--muted); }
.crumbs { font-size: 69px; line-height: 98px; white-space: nowrap; }
.crumb-small { margin-left: 18px; font-size: 51px; line-height: 60px; }
.tools { display: flex; align-items: center; height: 102px; }
.search {
  display: flex;
  align-items: center;
  gap: 18px;
  box-sizing: border-box;
  width: 589px;
  height: 102px;
  margin-right: 54px;
  padding: 0 24px 0 53px;
  border-radius: 51px;
  background: #f8faf9;
}
.search svg { width: 48px; height: 48px; stroke: var(--muted); stroke-width: 3; }
.search input {
  flex: 1;
  appearance: none;
  padding: 0;
  border: 0;
  background: none;
  font-family: "Noto Sans", sans-serif;
  font-size: 29px;
}
.search input::placeholder { color: var(--muted); opacity: 1; }
.tool { margin-right: 54px; }
.tool svg { width: 64px; height: 64px; stroke: var(--muted); stroke-width: 3; }
.tool .solid { fill: var(--muted); }
.tool .dot { fill: #f00; stroke: none; }
.account { display: flex; align-items: center; gap: 16px; }
.avatar {
  width: 86px;
  border-radius: 43px;
  background: #f0f0f0;
  font-size: 48px;
  font-weight: 900;
  line-height: 86px;
}
.account svg { width: 40px; height: 24px; stroke: var(--ink); stroke-width: 3; }

.tabs {
  display: flex;
  gap: 68px;
  padding: 38px 84px 0;
  font-size: 43px;
  line-height: 60px;
}
.tabs a { position: relative; white-space: nowrap; }
.tabs .active { font-weight: 700; }
.tabs .active::after {
  content: "";
  position: absolute;
  left: 4px;
  right: -10px;
  bottom: -16px;
  height: 7px;
  background: var(--pine);
}

.content {
  flex: 1;
  display: grid;
  grid-template-columns: minmax(0, 1610fr) minmax(0, 1694fr);
  grid-template-rows: minmax(0, 1fr);
  gap: 170px;
  min-height: 0;
  margin: 135px 0 0 84px;
}
.section-head {
  display: flex;
  align-items: baseline;
  justify-content: space-between;
}
h2 {
  font-family: "DejaVu Serif Condensed", "DejaVu Serif", serif;
  font-size: 69px;
  font-weight: 700;
  line-height: 54px;
}
.orders { padding-right: 6px; color: var(--teal); font-size: 42px; }
.check {
  display: flex;
  align-items: center;
  gap: 17px;
  height: 52px;
  margin-top: 47px;
}
.check input {
  appearance: none;
  width: 52px;
  height: 52px;
  margin: 0;
  border: 2px solid var(--line);
  border-radius: 9px;
}
.check input:checked { background: var(--teal); }
.stops {
  display: grid;
  grid-template-columns: 86px 1fr 191px;
  align-items: center;
  margin-top: 58px;
}
.stop-label { grid-column: 2; margin-bottom: 10px; }
.stop-label.second { margin-top: 33px; }
.marker { grid-column: 1; position: relative; display: flex; justify-content: center; width: 52px; }
.from-marker::after {
  content: "";
  position: absolute;
  top: 44px;
  left: 25px;
  height: 148px;
  border-left: 2px dashed var(--line);
}
.field {
  width: 100%;
  height: 120px;
  padding: 0 17px;
  border: 2px solid #c4cbc9;
  border-radius: 36px;
  background: #fff;
  font-size: 40px;
}
.field::placeholder { color: var(--line); opacity: 1; }
.field.filled { padding: 0 32px; border-color: #ececec; background: #ececec; font-size: 34px; }
.stop-actions { display: flex; align-items: center; justify-content: flex-end; gap: 34px; }
.plain svg, .round svg { stroke-width: 3; }
.round { flex: none; border-radius: 32px; background: #f0f0f0; }
.trip {
  display: grid;
  grid-template-columns: repeat(4, 1fr) 173px;
  gap: 18px;
  align-items: end;
  margin-top: 59px;
}
.trip-field { display: grid; gap: 10px; white-space: nowrap; }
.go {
  display: grid;
  place-items: center;
  justify-self: end;
  width: 154px;
  height: 120px;
  border-radius: 36px;
  background: var(--teal);
  stroke: #fff;
  stroke-width: 3;
}
.public { margin-top: 196px; }
.segments {
  display: flex;
  box-sizing: border-box;
  width: fit-content;
  height: 136px;
  margin: 78px 0 83px -2px;
  border: 4px solid #f0f0f0;
  border-radius: 38px;
  color: var(--muted);
  font-size: 42px;
}
.segments button { position: relative; padding: 0 51px; }
.segments .active { border-radius: 34px; background: #ececec; color: var(--ink); }
.segments button:last-child::before {
  content: "";
  position: absolute;
  top: 30px;
  bottom: 30px;
  left: 0;
  border-left: 2px solid #f0f0f0;
}
.route { margin-bottom: 99px; }
.route-head { display: flex; align-items: flex-end; height: 64px; padding-left: 4px; }
h3 { flex: 1; margin-left: 18px; font-size: 50px; line-height: 54px; }
.route-body { display: flex; justify-content: space-between; margin-top: 52px; }
.rows { display: grid; gap: 52px; }
.steps { display: flex; align-items: center; gap: 49px; height: 68px; }
.walk { width: 54px; height: 48px; fill: var(--ink); }
.next { width: 20px; height: 40px; stroke: var(--ink); stroke-width: 3; }
.buses { display: flex; gap: 18px; }
.bus {
  display: flex;
  align-items: center;
  gap: 13px;
  height: 68px;
  padding: 0 9px 0 14px;
  border-radius: 10px;
  background: #ececec;
  color: #375f57;
  font-size: 38px;
}
.bus svg { stroke: var(--ink); stroke-width: 3; }
.route-side {
  display: flex;
  flex-direction: column;
  align-items: flex-end;
  justify-content: space-between;
  font-size: 48px;
}
.route-side.inset { padding-right: 158px; }
.time { color: var(--muted); line-height: 46px; }
.details { color: var(--teal); font-size: 50px; line-height: 60px; }

.map { min-height: 0; overflow: hidden; }
.map svg { width: 100%; height: 100%; }
.map text { font-family: Roboto, sans-serif; stroke: none; }
.map .label, .map .valley { fill: #d93d6a; font-size: 33px; stroke: #fff; stroke-width: 6px; paint-order: stroke; }
.map .end { text-anchor: end; }
.map .town { fill: var(--ink); font-size: 37px; }
.map .food { fill: #edad49; }
.map .place { fill: #5f807a; stroke: none; font-size: 34px; }
.map .river { fill: #4173bf; stroke: none; }
.map .valley { fill: #5f807a; font-size: 25px; font-weight: 500; }
.map .shield { fill: #fff; font-size: 22px; font-weight: 700; text-anchor: middle; }
</style>
